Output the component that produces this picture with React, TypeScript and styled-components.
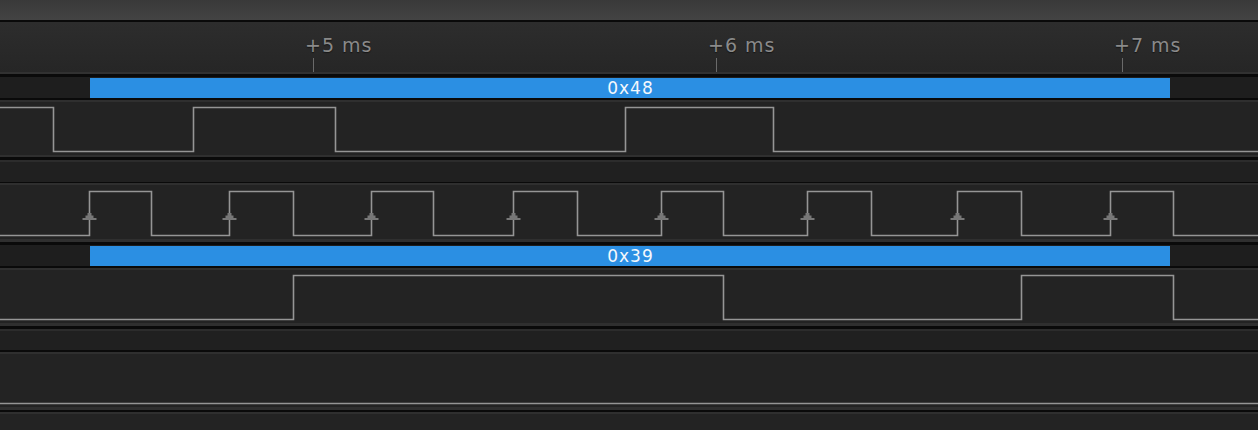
import React from "react";
import styled, { createGlobalStyle } from "styled-components";

const Global = createGlobalStyle`
  html, body { margin: 0; padding: 0; background: #0a0a0a; overflow: hidden; }
  * { box-sizing: border-box; }
`;

const Screen = styled.div`
  width: 1258px;
  height: 430px;
  display: flex;
  flex-direction: column;
  background: #0a0a0a;
  overflow: hidden;
  font-family: "DejaVu Sans", Verdana, sans-serif;
`;

const TopBar = styled.div`
  height: 20px;
  flex: none;
  background: linear-gradient(#393939, #434343);
`;

const Sep = styled.div<{ $h: number }>`
  height: ${(p) => p.$h}px;
  flex: none;
  background: #0a0a0a;
`;

const Ruler = styled.div`
  position: relative;
  height: 52px;
  flex: none;
  background: linear-gradient(#2d2d2d, #262626);
  border-bottom: 2px solid #313131;
`;

const TickMark = styled.div<{ $x: number }>`
  position: absolute;
  left: ${(p) => p.$x}px;
  top: 0;
  height: 100%;
`;

const TickLabel = styled.span`
  position: absolute;
  left: -8px;
  top: 14px;
  font-size: 19px;
  line-height: 19px;
  letter-spacing: 1px;
  color: #8a8a8a;
  white-space: nowrap;
  text-shadow: 0 1px 1px #151515;
`;

const TickLine = styled.div`
  position: absolute;
  left: 0;
  top: 36px;
  width: 1px;
  height: 14px;
  background: #6a6a6a;
`;

const DecoderRow = styled.div`
  height: 21px;
  flex: none;
  display: flex;
  padding: 1px 0 0 90px;
  background: #1e1e1e;
`;

const Bar = styled.div<{ $w: number }>`
  width: ${(p) => p.$w}px;
  height: 20px;
  background: #2b8fe3;
  display: flex;
  align-items: center;
  justify-content: center;
  color: #f4f8fc;
  font-size: 17px;
  line-height: 20px;
  letter-spacing: 1px;
  text-indent: 1px;
`;

const SignalRow = styled.div<{ $h?: number; $bb?: number }>`
  ${(p) => (p.$h ? `height: ${p.$h}px; flex: none;` : "flex: 1;")}
  background: #232323;
  border-top: 2px solid #2f2f2f;
  border-bottom: ${(p) => p.$bb ?? 0}px solid #2f2f2f;
  display: flex;
`;

const EmptyRow = styled.div<{ $h: number }>`
  height: ${(p) => p.$h}px;
  flex: none;
  background: #202020;
  border-top: 2px solid #2c2c2c;
`;

const WaveSvg = styled.svg`
  display: block;
  width: 1258px;
  height: 100%;
  overflow: visible;
`;

type WaveProps = {
  start: 0 | 1;
  edges: number[];
  high?: number;
  low?: number;
  arrows?: boolean;
  arrowY?: number;
};

function Wave({ start, edges, high = 5.5, low = 49.5, arrows, arrowY = 28 }: WaveProps) {
  let level = start;
  let d = `M -2 ${level ? high : low}`;
  const rises: number[] = [];
  for (const x of edges) {
    const xx = x + 0.5;
    d += ` L ${xx} ${level ? high : low}`;
    level = level ? 0 : 1;
    if (level) rises.push(xx);
    d += ` L ${xx} ${level ? high : low}`;
  }
  d += ` L 1262 ${level ? high : low}`;
  return (
    <WaveSvg>
      <path d={d} fill="none" stroke="#959595" strokeWidth={1.6} />
      {arrows &&
        rises.map((x) => {
          const t = arrowY;
          const pts = [
            [x - 7, t + 7],
            [x + 7, t + 7],
            [x + 7, t + 5],
            [x + 4, t + 5],
            [x + 4, t + 2.5],
            [x + 2, t + 2.5],
            [x + 2, t],
            [x - 2, t],
            [x - 2, t + 2.5],
            [x - 4, t + 2.5],
            [x - 4, t + 5],
            [x - 7, t + 5],
          ]
            .map((p) => p.join(","))
            .join(" ");
          return <polygon key={x} points={pts} fill="#777" />;
        })}
    </WaveSvg>
  );
}

const ticks = [
  { x: 313, label: "+5 ms" },
  { x: 716, label: "+6 ms" },
  { x: 1122, label: "+7 ms" },
];

export default function App() {
  return (
    <>
      <Global />
      <Screen>
        <TopBar />
        <Sep $h={2} />
        <Ruler>
          {ticks.map((t) => (
            <TickMark key={t.x} $x={t.x}>
              <TickLabel>{t.label}</TickLabel>
              <TickLine />
            </TickMark>
          ))}
        </Ruler>
        <Sep $h={3} />
        <DecoderRow>
          <Bar $w={1080}>0x48</Bar>
        </DecoderRow>
        <Sep $h={2} />
        <SignalRow $h={57} $bb={2}>
          <Wave start={1} edges={[53, 193, 335, 625, 773]} />
        </SignalRow>
        <Sep $h={3} />
        <EmptyRow $h={22} />
        <Sep $h={1} />
        <SignalRow $h={59} $bb={3}>
          <Wave
            start={0}
            edges={[89, 151, 229, 293, 371, 433, 513, 577, 661, 723, 807, 871, 957, 1021, 1110, 1173]}
            high={6.5}
            low={50.5}
            arrows
            arrowY={28}
          />
        </SignalRow>
        <Sep $h={3} />
        <DecoderRow>
          <Bar $w={1080}>0x39</Bar>
        </DecoderRow>
        <Sep $h={2} />
        <SignalRow $h={58} $bb={3}>
          <Wave start={0} edges={[293, 723, 1021, 1173]} />
        </SignalRow>
        <Sep $h={3} />
        <EmptyRow $h={21} />
        <Sep $h={2} />
        <SignalRow $h={58} $bb={3}>
          <Wave start={0} edges={[]} />
        </SignalRow>
        <Sep $h={2} />
        <SignalRow />
      </Screen>
    </>
  );
}
